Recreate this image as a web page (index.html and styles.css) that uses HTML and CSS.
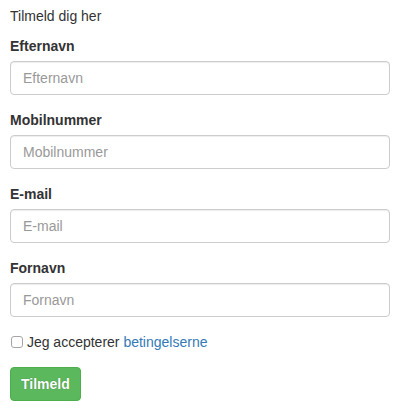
FILE: index.html
```html
<!DOCTYPE html>
<html lang="da">
<head>
<meta charset="utf-8">
<title>Tilmeld</title>
<link rel="stylesheet" href="styles.css">
</head>
<body>
<div class="page">
  <p class="intro">Tilmeld dig her</p>
  <form class="signup">
    <div class="form-group">
      <label class="field-label" for="efternavn">Efternavn</label>
      <input class="form-control" id="efternavn" type="text" placeholder="Efternavn">
    </div>
    <div class="form-group">
      <label class="field-label" for="mobil">Mobilnummer</label>
      <input class="form-control" id="mobil" type="text" placeholder="Mobilnummer">
    </div>
    <div class="form-group">
      <label class="field-label" for="email">E-mail</label>
      <input class="form-control" id="email" type="text" placeholder="E-mail">
    </div>
    <div class="form-group">
      <label class="field-label" for="fornavn">Fornavn</label>
      <input class="form-control" id="fornavn" type="text" placeholder="Fornavn">
    </div>
    <div class="check-row">
      <label class="check-label"><input class="check" type="checkbox"> Jeg accepterer <a class="terms" href="#">betingelserne</a></label>
    </div>
    <button class="btn-success" type="button">Tilmeld</button>
  </form>
</div>
</body>
</html>
```

FILE: styles.css
```css
* { box-sizing: border-box; }
html, body {
  margin: 0;
  padding: 0;
  background: #fff;
}
body {
  font-family: "Liberation Sans", Arial, sans-serif;
  font-size: 14px;
  line-height: 20px;
  color: #333;
}
.page {
  width: 390px;
  padding: 6px 0 0 10px;
}
.intro {
  margin: 0 0 10px;
}
.signup {
  margin: 0;
}
.form-group {
  margin-bottom: 15px;
}
.field-label {
  display: block;
  font-weight: bold;
  margin-bottom: 5px;
  line-height: 20px;
}
.form-control {
  display: block;
  width: 100%;
  height: 34px;
  padding: 6px 12px;
  font-family: "Liberation Sans", Arial, sans-serif;
  font-size: 14px;
  line-height: 20px;
  color: #555;
  background: #fff;
  border: 1px solid #ccc;
  border-radius: 4px;
  box-shadow: inset 0 1px 1px rgba(0,0,0,.075);
  margin: 0;
  outline: none;
}
.form-control::placeholder {
  color: #999;
  opacity: 1;
}
.check-row {
  margin-bottom: 15px;
  line-height: 20px;
}
.check-label {
  font-weight: normal;
}
.check {
  -webkit-appearance: none;
  appearance: none;
  display: inline-block;
  width: 12px;
  height: 12px;
  margin: 0 0 0 1px;
  border: 1px solid #a6a6a6;
  border-radius: 3px;
  background: #fff;
  vertical-align: -1px;
}
.terms {
  color: #337ab7;
  text-decoration: none;
}
.btn-success {
  display: block;
  height: 34px;
  padding: 6px 10px;
  font-family: "Liberation Sans", Arial, sans-serif;
  font-size: 14px;
  font-weight: bold;
  line-height: 20px;
  color: #fff;
  background: #5cb85c;
  border: 1px solid #4cae4c;
  border-radius: 4px;
  text-shadow: 0 0 1px rgba(0,0,0,.35);
  cursor: pointer;
}
```
